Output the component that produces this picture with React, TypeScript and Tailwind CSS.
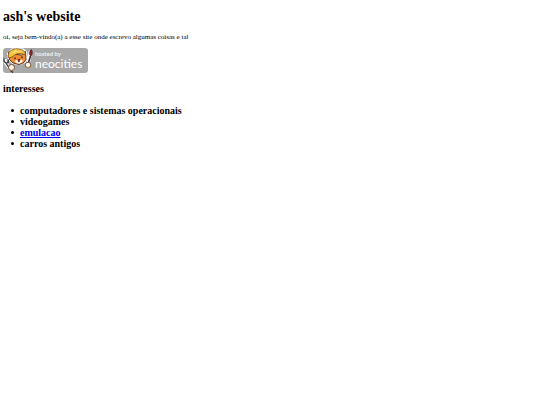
import React from 'react'

interface Interest {
  name: string
  href?: string
}

const interests: Interest[] = [
  { name: 'computadores e sistemas operacionais' },
  { name: 'videogames' },
  { name: 'emulacao', href: '#emulacao' },
  { name: 'carros antigos' }
]

// Cat with a helmet, holding a wrench and a brush
const CatMascot: React.FC = () => (
  <svg className="w-8 h-[25px] shrink-0" viewBox="0 0 32 25" aria-hidden="true">
    {/* white outline */}
    <g fill="#fff" stroke="#fff" strokeWidth="2" strokeLinejoin="round">
      <path d="M5 6 9 1.500 14 1l6 .5 3 2.500 1 6-2 4-6 2-6-1-4-4z" />
      <path d="M2 11v3l6 8M27.500 3l-2 11" fill="none" strokeWidth="3.400" />
    </g>
    {/* wrench */}
    <path d="M1 10.500v3l2 1.500 2-.5.500-3M3 15l5 8 2 1.500" fill="none" stroke="#37343a" strokeWidth="1.4" />
    <path d="m3 14 4 5" fill="none" stroke="#9b9ca3" strokeWidth="0.6" />
    {/* head */}
    <path d="M6 8 5.500 4l4 2 9 1 4-3.500.5 8-2 3-5 2-6-1.500-3.500-3.500z" fill="#ef8b32" stroke="#4b2a18" strokeWidth="0.9" />
    <path d="m11.500 13 2-1 1.500.5 3-1 2 1-1 2-3 1.300-3-.8z" fill="#fff3df" />
    <path d="M5 8 6 4l3.500-2.500 4-.8 5 .8 3.500 2.500.5 3-4-1.500-5 .5-4.500 3-3 1z" fill="#f3c13d" stroke="#765018" strokeWidth="0.8" />
    <path d="m7.500 5.500 5-2 6 .5M13 1l-1.500 4" fill="none" stroke="#ffe68a" strokeWidth="0.8" />
    <path d="M12 9.500v1.700M19 8.500v1.700" stroke="#291b19" strokeWidth="1.3" />
    <path d="m15 11.500 2-.5-.5 2.500-1 .5z" fill="#a3291f" stroke="#451b18" strokeWidth="0.6" />
    {/* brush */}
    <path d="m27.500 8-2.500 8" stroke="#35292a" strokeWidth="1.5" />
    <path d="M28.500 1.500c-2 1-2.500 4-1.500 6h1.500c1-2 1-4 0-6z" fill="#8f2527" stroke="#432124" strokeWidth="0.7" />
    {/* paws */}
    <circle cx="8.500" cy="19.500" r="3" fill="#fff8ec" stroke="#5b3a25" strokeWidth="0.9" />
    <circle cx="25" cy="17" r="2.800" fill="#fff8ec" stroke="#5b3a25" strokeWidth="0.8" />
    <path d="M6.500 21c1 1.500 3 1.500 4.500 0M23 18.500c1 1 2.500 1 4 0" fill="none" stroke="#e9a04a" strokeWidth="0.9" />
  </svg>
)

const HostBadge: React.FC = () => (
  <a
    href="https://neocities.org"
    className="flex w-[85px] h-[25px] rounded-[3px] bg-[#a8a8a8] text-white no-underline font-['Lato',sans-serif]"
  >
    <CatMascot />
    <span className="flex flex-col pt-[2px] whitespace-nowrap">
      <span className="text-[6px] leading-[7px]">hosted by</span>
      <span className="text-[12px] leading-[14px]">neocities</span>
    </span>
  </a>
)

const App: React.FC = () => {
  return (
    <main className="px-[3px] pt-[9px] bg-white text-black font-['Liberation_Serif',serif]">
      <h1 className="text-[14px] leading-4 font-bold">ash's website</h1>
      <p className="mt-2 text-[7px] leading-2">
        oi, seja bem-vindo(a) a esse site onde escrevo algumas coisas e tal
      </p>
      <div className="mt-[7px]">
        <HostBadge />
      </div>
      <h2 className="mt-[10px] text-[10px] leading-3 font-bold">interesses</h2>
      <ul className="mt-[10px] pl-2 text-[10px] leading-[11px] font-bold">
        {interests.map(({ name, href }) => (
          <li
            key={name}
            className="flex items-center gap-[6px] before:size-[3px] before:rounded-full before:bg-black"
          >
            {href ? (
              <a href={href} className="text-[#0000ee] underline">{name}</a>
            ) : (
              <span>{name}</span>
            )}
          </li>
        ))}
      </ul>
    </main>
  )
}

export default App
